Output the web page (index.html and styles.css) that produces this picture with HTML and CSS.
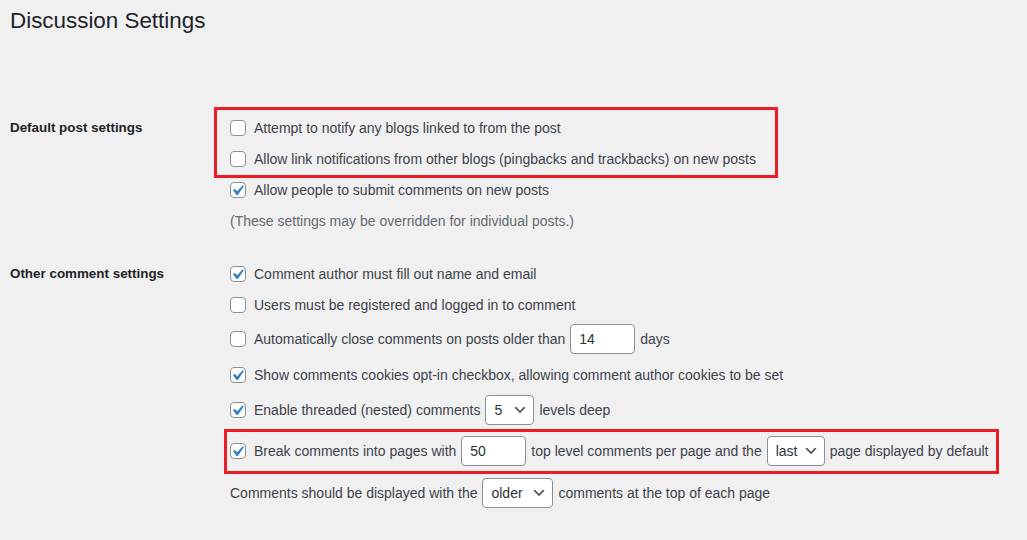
FILE: index.html
```html
<!DOCTYPE html>
<html lang="en">
<head>
<meta charset="utf-8">
<title>Discussion Settings</title>
<link rel="stylesheet" href="styles.css">
</head>
<body>
<div class="page">
  <h1 class="title">Discussion Settings</h1>

  <div class="section section-default">
    <div class="row-label">Default post settings</div>
    <div class="fields">
      <div class="highlight highlight-top">
        <div class="row">
          <svg class="cb" width="16" height="16" viewBox="0 0 16 16"><rect x="0.5" y="0.5" width="15" height="15" rx="3.5"/></svg>
          <span>Attempt to notify any blogs linked to from the post</span>
        </div>
        <div class="row">
          <svg class="cb" width="16" height="16" viewBox="0 0 16 16"><rect x="0.5" y="0.5" width="15" height="15" rx="3.5"/></svg>
          <span>Allow link notifications from other blogs (pingbacks and trackbacks) on new posts</span>
        </div>
      </div>
      <div class="row">
        <svg class="cb" width="16" height="16" viewBox="0 0 16 16"><rect x="0.5" y="0.5" width="15" height="15" rx="3.5"/><path transform="translate(-3 -2) scale(1.05)" d="M14.83 4.89l1.34.94-5.81 8.38H9.02L5.78 9.67l1.34-1.25 2.57 2.4z"/></svg>
        <span>Allow people to submit comments on new posts</span>
      </div>
      <div class="row description">(These settings may be overridden for individual posts.)</div>
    </div>
  </div>

  <div class="section section-other">
    <div class="row-label">Other comment settings</div>
    <div class="fields">
      <div class="row">
        <svg class="cb" width="16" height="16" viewBox="0 0 16 16"><rect x="0.5" y="0.5" width="15" height="15" rx="3.5"/><path transform="translate(-3 -2) scale(1.05)" d="M14.83 4.89l1.34.94-5.81 8.38H9.02L5.78 9.67l1.34-1.25 2.57 2.4z"/></svg>
        <span>Comment author must fill out name and email</span>
      </div>
      <div class="row">
        <svg class="cb" width="16" height="16" viewBox="0 0 16 16"><rect x="0.5" y="0.5" width="15" height="15" rx="3.5"/></svg>
        <span>Users must be registered and logged in to comment</span>
      </div>
      <div class="row row-37">
        <svg class="cb" width="16" height="16" viewBox="0 0 16 16"><rect x="0.5" y="0.5" width="15" height="15" rx="3.5"/></svg>
        <span>Automatically close comments on posts older than</span>
        <span class="text-input">14</span>
        <span>days</span>
      </div>
      <div class="row row-35">
        <svg class="cb" width="16" height="16" viewBox="0 0 16 16"><rect x="0.5" y="0.5" width="15" height="15" rx="3.5"/><path transform="translate(-3 -2) scale(1.05)" d="M14.83 4.89l1.34.94-5.81 8.38H9.02L5.78 9.67l1.34-1.25 2.57 2.4z"/></svg>
        <span>Show comments cookies opt-in checkbox, allowing comment author cookies to be set</span>
      </div>
      <div class="row row-35">
        <svg class="cb" width="16" height="16" viewBox="0 0 16 16"><rect x="0.5" y="0.5" width="15" height="15" rx="3.5"/><path transform="translate(-3 -2) scale(1.05)" d="M14.83 4.89l1.34.94-5.81 8.38H9.02L5.78 9.67l1.34-1.25 2.57 2.4z"/></svg>
        <span>Enable threaded (nested) comments</span>
        <span class="select select-5"><span>5</span><svg width="16" height="16" viewBox="0 0 20 20"><path d="M5 6l5 5 5-5 2 1-7 7-7-7 2-1z"/></svg></span>
        <span>levels deep</span>
      </div>
      <div class="highlight highlight-bottom">
        <div class="row row-47">
          <svg class="cb" width="16" height="16" viewBox="0 0 16 16"><rect x="0.5" y="0.5" width="15" height="15" rx="3.5"/><path transform="translate(-3 -2) scale(1.05)" d="M14.83 4.89l1.34.94-5.81 8.38H9.02L5.78 9.67l1.34-1.25 2.57 2.4z"/></svg>
          <span>Break comments into pages with</span>
          <span class="text-input">50</span>
          <span>top level comments per page and the</span>
          <span class="select select-last"><span>last</span><svg width="16" height="16" viewBox="0 0 20 20"><path d="M5 6l5 5 5-5 2 1-7 7-7-7 2-1z"/></svg></span>
          <span>page displayed by default</span>
        </div>
      </div>
      <div class="row row-37 no-cb">
        <span>Comments should be displayed with the</span>
        <span class="select select-older"><span>older</span><svg width="16" height="16" viewBox="0 0 20 20"><path d="M5 6l5 5 5-5 2 1-7 7-7-7 2-1z"/></svg></span>
        <span>comments at the top of each page</span>
      </div>
    </div>
  </div>
</div>
</body>
</html>
```

FILE: styles.css
```css
html, body {
  margin: 0;
  padding: 0;
  background: #f0f0f1;
}

body {
  font-family: "Liberation Sans", Arial, sans-serif;
  font-size: 14px;
  color: #3c434a;
  height: 540px;
  overflow: hidden;
}

.page {
  padding: 6px 0 0 10px;
}

.title {
  margin: 0;
  font-size: 22.4px;
  line-height: 30px;
  font-weight: 400;
  color: #1d2327;
}

.section {
  display: grid;
  grid-template-columns: 220px 1fr;
}

.section-default {
  margin-top: 76px;
}

.section-other {
  margin-top: 22px;
}

.row-label {
  font-size: 13.4px;
  font-weight: 700;
  color: #1d2327;
  line-height: 31px;
}

.fields {
  display: flex;
  flex-direction: column;
}

.row {
  display: flex;
  align-items: center;
  gap: 5px;
  height: 31px;
  white-space: nowrap;
}

.row-35 { height: 35px; }
.row-37 { height: 37px; }
.row-47 { height: 47px; }

.cb {
  flex: none;
  margin-right: 3px;
}

.cb rect {
  fill: #ffffff;
  stroke: #8c8f94;
}

.cb path {
  fill: #3582c4;
}

.description {
  color: #646970;
}

.text-input,
.select {
  box-sizing: border-box;
  height: 30px;
  background: #ffffff;
  border: 1px solid #8c8f94;
  border-radius: 4px;
  color: #2c3338;
  display: inline-flex;
  align-items: center;
  padding: 0 0 0 8px;
}

.text-input {
  width: 65px;
}

.select {
  justify-content: space-between;
  padding-right: 5px;
}

.select svg {
  fill: #50575e;
  flex: none;
}

.select-5 { width: 49px; }
.select-last { width: 58px; }
.select-older { width: 71px; }

.highlight {
  position: relative;
}

.highlight::after {
  content: "";
  position: absolute;
  border: 3px solid #ec1c24;
  box-sizing: border-box;
  pointer-events: none;
}

.highlight-top::after {
  left: -16px;
  top: -5px;
  width: 564px;
  height: 71px;
}

.highlight-bottom::after {
  left: -6px;
  top: 2px;
  width: 775px;
  height: 45px;
}
```
